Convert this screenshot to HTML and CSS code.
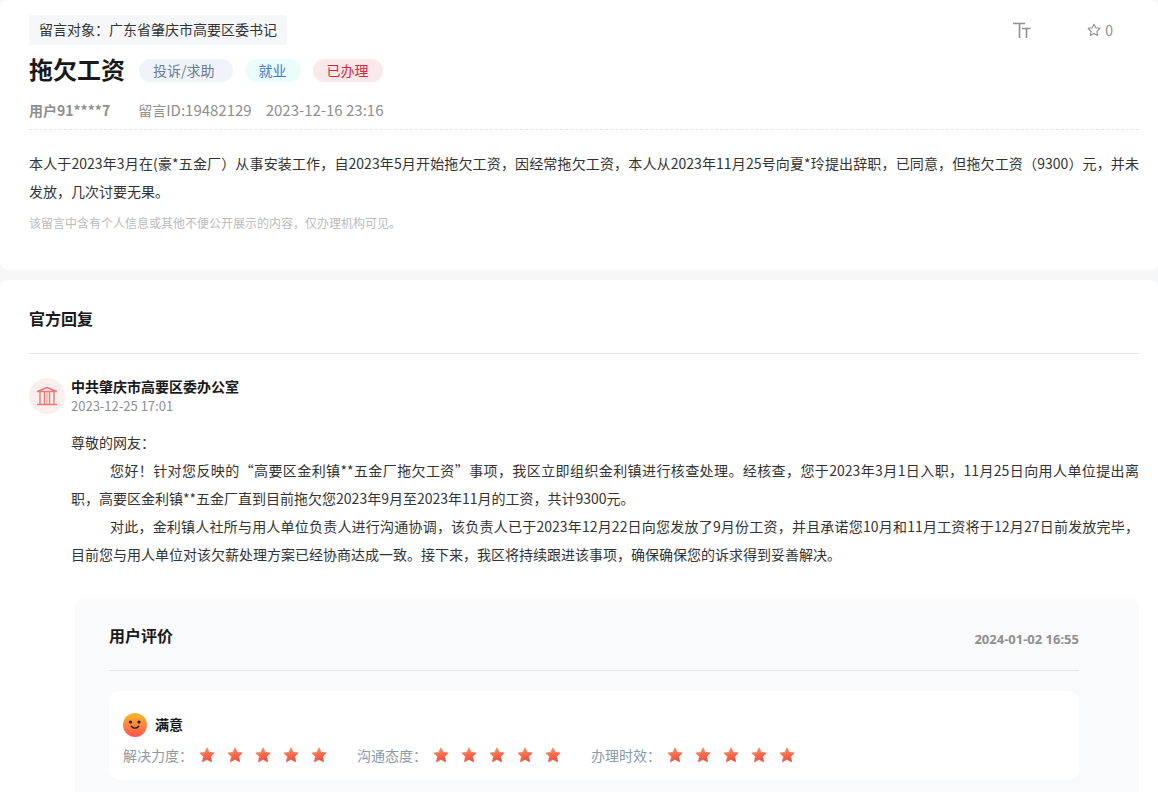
FILE: index.html
```html
<!DOCTYPE html>
<html lang="zh-CN">
<head>
<meta charset="utf-8">
<title>拖欠工资</title>
<link rel="stylesheet" href="styles.css">
</head>
<body>
<svg class="defs" aria-hidden="true">
  <defs>
    <linearGradient id="starFill" x1="0.2" y1="0" x2="0.6" y2="1">
      <stop offset="0" stop-color="#fb9568"/>
      <stop offset="1" stop-color="#f04636"/>
    </linearGradient>
    <linearGradient id="faceFill" x1="0" y1="0" x2="0" y2="1">
      <stop offset="0" stop-color="#fbb829"/>
      <stop offset="1" stop-color="#ff5553"/>
    </linearGradient>
    <symbol id="star" viewBox="0 0 16 16">
      <path d="M8 .8 10.2 5.4 15.2 6 11.5 9.5 12.5 14.7 8 12.3 3.500 14.700 4.500 9.500 .8 6 5.800 5.400Z" fill="url(#starFill)" stroke="url(#starFill)" stroke-width=".8" stroke-linejoin="round"/>
    </symbol>
  </defs>
</svg>

<main class="page">
  <section class="card message">
    <header class="topbar">
      <p class="target">留言对象：广东省肇庆市高要区委书记</p>
      <div class="tools">
        <button class="tool" type="button" aria-label="字体大小">
          <svg width="18" height="17" viewBox="0 0 18 17"><path d="M0 1.500H12M6.500 1.500V16M9 6.500H17.500M13.500 6.500V16" fill="none" stroke="#8f8f8f" stroke-width="1.600"/></svg>
        </button>
        <button class="tool" type="button" aria-label="收藏 0">
          <svg width="14" height="14" viewBox="0 0 14 14"><path d="M7 1.200 8.800 4.800 12.900 5.400 9.900 8.300 10.600 12.400 7 10.500 3.400 12.400 4.100 8.300 1.100 5.400 5.200 4.800Z" fill="none" stroke="#8f8f8f" stroke-width="1.100" stroke-linejoin="round"/></svg>
          <span>0</span>
        </button>
      </div>
    </header>
    <div class="title-row">
      <h1 class="title">拖欠工资</h1>
      <span class="pill pill-kind">投诉/求助</span>
      <span class="pill pill-field">就业</span>
      <span class="pill pill-state">已办理</span>
    </div>
    <div class="meta">
      <strong class="user">用户91****7</strong>
      <span><span class="meta-label">留言</span>ID:19482129</span>
      <time>2023-12-16 23:16</time>
    </div>
    <p class="text">本人于2023年3月在(豪*五金厂）从事安装工作，自2023年5月开始拖欠工资，因经常拖欠工资，本人从2023年11月25号向夏*玲提出辞职，已同意，但拖欠工资（9300）元，并未发放，几次讨要无果。</p>
    <p class="notice">该留言中含有个人信息或其他不便公开展示的内容，仅办理机构可见。</p>
  </section>

  <section class="card reply">
    <h2 class="heading">官方回复</h2>
    <div class="office">
      <span class="avatar">
        <svg width="22" height="20" viewBox="0 0 22 20"><path d="M1.500 5.500 11 1.500 20.500 5.500ZM4 6V18M8.500 6V18M13.500 6V18M18 6V18M1 18.500H21" fill="none" stroke="#e67a75" stroke-width="1.400" stroke-linejoin="round"/><path d="M11 6V18" stroke="#f0aaa6" stroke-width="1.400"/></svg>
      </span>
      <div>
        <h3 class="office-name">中共肇庆市高要区委办公室</h3>
        <time class="office-time">2023-12-25 17:01</time>
      </div>
    </div>
    <div class="reply-body">
      <p class="text">尊敬的网友：</p>
      <p class="text indent">您好！针对您反映的“高要区金利镇**五金厂拖欠工资”事项，我区立即组织金利镇进行核查处理。经核查，您于2023年3月1日入职，11月25日向用人单位提出离<span class="keep">职，高要区</span>金利镇**五金厂直到目前拖欠您2023年9月至2023年11月的工资，共计9300元。</p>
      <p class="text indent">对此，金利镇人社所与用人单位负责人进行沟通协调，该负责人已于2023年12月22日向您发放了9月份工资，并且承诺您10月和11月工资将于12月27日前发放完毕，<span class="keep">目前您与</span>用人单位对该欠薪处理方案已经协商达成一致。接下来，我区将持续跟进该事项，确保确保您的诉求得到妥善解决。</p>
    </div>

    <div class="review">
      <header class="review-head">
        <h2 class="review-title">用户评价</h2>
        <time class="review-time">2024-01-02 16:55</time>
      </header>
      <div class="score">
        <div class="mood">
          <svg width="24" height="24" viewBox="0 0 24 24"><circle cx="12" cy="12" r="12" fill="url(#faceFill)"/><circle cx="7.500" cy="9" r="1.600" fill="#2d1a12"/><circle cx="16" cy="9" r="1.600" fill="#2d1a12"/><path d="M8.200 13.200Q12 17.200 15.800 13.200" fill="none" stroke="#2d1a12" stroke-width="1.300" stroke-linecap="round"/></svg>
          <strong>满意</strong>
        </div>
        <div class="ratings">
          <div class="rating"><span class="rating-label">解决力度：</span><span class="stars" role="img" aria-label="5星"><svg><use href="#star"/></svg><svg><use href="#star"/></svg><svg><use href="#star"/></svg><svg><use href="#star"/></svg><svg><use href="#star"/></svg></span></div>
          <div class="rating"><span class="rating-label">沟通态度：</span><span class="stars" role="img" aria-label="5星"><svg><use href="#star"/></svg><svg><use href="#star"/></svg><svg><use href="#star"/></svg><svg><use href="#star"/></svg><svg><use href="#star"/></svg></span></div>
          <div class="rating"><span class="rating-label">办理时效：</span><span class="stars" role="img" aria-label="5星"><svg><use href="#star"/></svg><svg><use href="#star"/></svg><svg><use href="#star"/></svg><svg><use href="#star"/></svg><svg><use href="#star"/></svg></span></div>
        </div>
      </div>
    </div>
  </section>
</main>
</body>
</html>
```
FILE: styles.css
```css
* { box-sizing: border-box; }

body {
  margin: 0;
  background: #f6f7f9;
  color: #333;
  font: 14px/20px "Noto Sans CJK SC", "Microsoft YaHei", sans-serif;
}

h1, h2, h3, p { margin: 0; }

.defs { position: absolute; width: 0; height: 0; }

.page {
  display: flex;
  flex-direction: column;
  gap: 10px;
}

.card {
  background: #fff;
  border-radius: 8px;
  padding: 0 19px 0 29px;
}

.message { padding-top: 15px; padding-bottom: 37px; }

.topbar {
  display: flex;
  justify-content: space-between;
  align-items: center;
}

.target {
  padding: 0 10px 2px;
  line-height: 28px;
  background: #f6f7f9;
  border-radius: 2px;
}

.tools {
  display: flex;
  gap: 56px;
  margin-right: 26px;
}

.tool {
  display: flex;
  align-items: center;
  gap: 4px;
  padding: 0;
  border: 0;
  background: none;
  color: #8f8f8f;
  font: inherit;
  cursor: pointer;
}

.title-row {
  display: flex;
  align-items: center;
  gap: 12px;
  margin-top: 8px;
}

.title {
  margin-right: 2px;
  padding-bottom: 2px;
  color: #191919;
  font-size: 24px;
  line-height: 32px;
}

.pill {
  padding: 0 14px;
  line-height: 23px;
  border-radius: 12px;
}

.pill-kind { padding-right: 18px; background: #f0f4fa; color: #6c7b91; }
.pill-field { background: #ebfdfa; color: #3f78c4; }
.pill-state { background: #fae9ea; color: #d9263e; }

.meta {
  display: flex;
  gap: 14px;
  padding: 11px 0 7px;
  border-bottom: 1px dashed #e5e5e5;
  color: #8f8f8f;
  font-size: 15px;
  line-height: 24px;
}

.user { margin-right: 14px; font-size: 14px; }
.meta-label { font-size: 14px; }

.message .text { margin-top: 19px; }

.text {
  line-height: 28px;
  text-align: justify;
}

.indent { text-indent: 39px; }
.keep { white-space: nowrap; }

.notice {
  margin-top: 8px;
  color: #bbb;
  font-size: 12px;
}

.reply { border-radius: 8px 8px 0 0; }

.heading {
  padding: 26px 0 23px;
  border-bottom: 1px solid #e6e6e6;
  color: #191919;
  font-size: 16px;
  line-height: 24px;
}

.office {
  display: flex;
  align-items: center;
  gap: 6px;
  margin-top: 22px;
}

.avatar {
  display: flex;
  align-items: center;
  justify-content: center;
  width: 36px;
  height: 36px;
  border-radius: 50%;
  background: #fdeeee;
}

.office-name {
  color: #191919;
  font-size: 14px;
  line-height: 20px;
}

.office-time {
  display: block;
  color: #8f8f8f;
  font-size: 13px;
  line-height: 20px;
}

.reply-body { margin: 12px 0 31px 42px; }

.review {
  margin-left: 46px;
  padding: 24px 60px 12px 34px;
  border-radius: 8px 8px 0 0;
  background: #f9fafc;
}

.review-head {
  display: flex;
  justify-content: space-between;
  align-items: flex-end;
  padding-bottom: 21px;
  border-bottom: 1px solid #e5e6e8;
}

.review-title {
  padding-bottom: 2px;
  color: #191919;
  font-size: 16px;
  line-height: 24px;
}

.review-time {
  color: #8f8f8f;
  font-family: "Noto Sans", sans-serif;
  font-size: 13px;
  font-weight: 700;
}

.score {
  margin-top: 20px;
  padding: 22px 14px 15px;
  border-radius: 10px;
  background: #fff;
}

.mood {
  display: flex;
  align-items: center;
  gap: 8px;
  color: #191919;
}

.mood strong { padding-bottom: 2px; }

.ratings {
  display: flex;
  flex-wrap: wrap;
  gap: 8px 30px;
  margin-top: 8px;
}

.rating {
  display: flex;
  align-items: center;
  gap: 6px;
}

.rating-label { color: #8c99a8; }

.stars { display: flex; gap: 12px; }
.stars svg { width: 16px; height: 16px; }
```
